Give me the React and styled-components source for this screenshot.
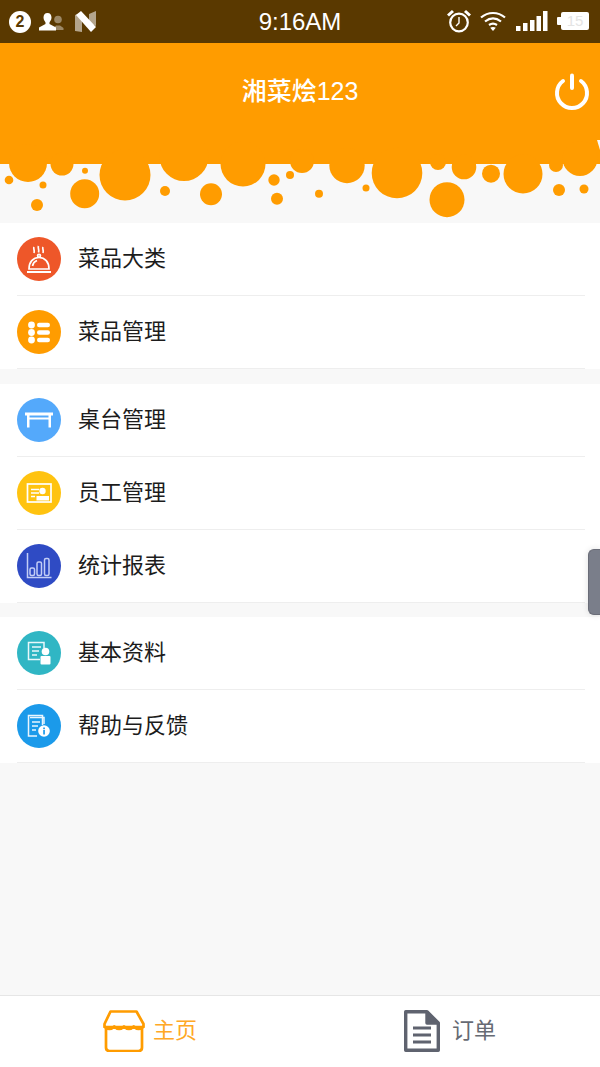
import React from 'react';
import styled, { createGlobalStyle } from 'styled-components';

const GlobalStyle = createGlobalStyle`
  html, body {
    margin: 0;
    padding: 0;
    background: #f8f8f8;
  }
  * {
    box-sizing: border-box;
  }
`;

const FONT = `"Liberation Sans", "Noto Sans CJK SC", sans-serif`;
const ORANGE = '#ff9c00';

const Page = styled.div`
  position: relative;
  width: 600px;
  height: 1067px;
  overflow: hidden;
  display: flex;
  flex-direction: column;
  background: #f8f8f8;
  font-family: ${FONT};
`;

const StatusBar = styled.div`
  height: 43px;
  flex: none;
  display: grid;
  grid-template-columns: 1fr auto 1fr;
  align-items: center;
  padding: 0 11px 0 9px;
  background: #5a3900;
  color: #fff;
`;

const StatusGroup = styled.div`
  display: flex;
  align-items: center;
  justify-content: ${props => (props.$right ? 'flex-end' : 'flex-start')};
  gap: ${props => props.$gap}px;
  padding-bottom: ${props => (props.$right ? 1 : 0)}px;
`;

const Badge = styled.div`
  width: 22px;
  height: 22px;
  border-radius: 50%;
  background: #fff;
  color: #5a3900;
  font-size: 16px;
  font-weight: 700;
  line-height: 22px;
  text-align: center;
`;

const Clock = styled.div`
  margin-left: 2px;
  font-size: 24px;
  line-height: 43px;
`;

const Battery = styled.div`
  position: relative;
  width: 28px;
  height: 18px;
  margin-left: 4px;
  border-radius: 2px;
  background: #fff;
  color: #e4e4e4;
  font-size: 15px;
  line-height: 18px;
  text-align: center;

  &::before {
    content: '';
    position: absolute;
    left: -4px;
    top: 5px;
    width: 4px;
    height: 8px;
    border-radius: 1px 0 0 1px;
    background: #fff;
  }
`;

const Header = styled.header`
  height: 97px;
  flex: none;
  display: grid;
  grid-template-columns: 1fr auto 1fr;
  align-items: center;
  background: ${ORANGE};
  color: #fff;
`;

const Title = styled.h1`
  grid-column: 2;
  margin: 0;
  font-size: 25px;
  font-weight: 500;
  line-height: 97px;
`;

const PowerButton = styled.div`
  grid-column: 3;
  justify-self: end;
  display: flex;
  margin-right: 10px;
`;

const Wave = styled.svg`
  display: block;
  flex: none;
`;

const Groups = styled.main`
  flex: 1;
  display: flex;
  flex-direction: column;
`;

const Group = styled.section`
  margin-top: ${props => props.$top}px;
  background: #fff;
`;

const Row = styled.div`
  height: 73px;
  margin-left: 17px;
  display: flex;
  align-items: center;
  gap: 17px;
  border-bottom: 1px solid #eeeeee;
  margin-right: 15px;
  padding-bottom: 1px;
`;

const RoundIcon = styled.div`
  width: 44px;
  height: 44px;
  flex: none;
  border-radius: 50%;
  background: ${props => props.$color};
  display: flex;
`;

const RowLabel = styled.span`
  padding-bottom: 5px;
  font-size: 22px;
  color: #1c1c1c;
`;

const TabBar = styled.nav`
  height: 72px;
  flex: none;
  display: grid;
  grid-template-columns: 1fr 1fr;
  background: #fff;
  border-top: 1px solid #e6e6e6;
`;

const Tab = styled.div`
  display: flex;
  align-items: center;
  justify-content: center;
  gap: ${props => props.$gap}px;
  padding-bottom: 1px;
  color: ${props => (props.$active ? '#ffa826' : '#666a73')};
  font-size: 22px;
`;

const TabLabel = styled.span`
  padding-bottom: 7px;
`;

const SideHandle = styled.div`
  position: absolute;
  right: 0;
  top: 549px;
  width: 12px;
  height: 66px;
  border-radius: 6px 0 0 6px;
  background: #7a7e8a;
  border: 1px solid #6a6d78;
  border-right: none;
  box-shadow: 0 0 6px rgba(0, 0, 0, 0.12);
`;

const bubbles = [
  [28, 163, 19], [62, 164, 11.5], [85, 170.7, 3], [9, 180, 4.3], [43, 185, 3.5],
  [84.7, 193.7, 14.5], [125, 175, 25.5], [37, 205, 6], [165, 191, 5], [184, 156.5, 24.5],
  [211, 194.3, 11], [243, 164, 22.5], [274, 180, 5.7], [277, 198.7, 6], [290, 175, 4],
  [302, 161, 12], [347, 165.5, 17.7], [319, 193.7, 4], [366, 188, 3.5], [397, 173, 25.3],
  [447, 199.7, 17.5], [438, 162, 8], [464, 167, 12.3], [491, 173.7, 9], [523, 174, 19.5],
  [559, 190, 6], [584, 189, 4.5], [556, 165, 7], [580, 158.5, 17.5],
];

const Bubbles = () => (
  <Wave width="600" height="83" viewBox="0 140 600 83">
    <path d="M0 140H597L600 150V164H0Z" fill={ORANGE} />
    {bubbles.map(([cx, cy, r]) => (
      <circle key={`${cx}-${cy}`} cx={cx} cy={cy} r={r} fill={ORANGE} />
    ))}
  </Wave>
);

const PeopleIcon = () => (
  <svg width="25" height="18" viewBox="0 0 25 18">
    <g fill="#fff" opacity="0.4">
      <circle cx="19" cy="6.500" r="3.800" />
      <path d="M15 17v-2.500l2-2h4l3.500 2.500v2z" />
    </g>
    <path d="M8.500 0C5.800 0 4.500 2 4.500 4.500S6 8 6.500 9.500V11L0 14.500V17.500H17V14.500L10.500 11V9.500C11 8 12.500 7 12.500 4.500S11.200 0 8.500 0Z" fill="#fff" />
  </svg>
);

const NIcon = () => (
  <svg width="22" height="21" viewBox="0 0 22 21" style={{ marginLeft: 3 }}>
    <path d="M0 4L7 1V21L0 20ZM14 3L21 0V15L14 12Z" fill="#fff" opacity="0.55" />
    <path d="M1 4L6 0L21 16L16 21Z" fill="#fff" />
  </svg>
);

const AlarmIcon = () => (
  <svg width="24" height="24" viewBox="0 0 24 24" fill="none" stroke="#fff" style={{ marginRight: 9 }}>
    <circle cx="12" cy="13.500" r="8.800" strokeWidth="2.200" />
    <path d="M12 8v6l-3 3" strokeWidth="1.400" />
    <path d="M1 6.500L6 2M23 6.500L18 2" strokeWidth="3" />
  </svg>
);

const WifiIcon = () => (
  <svg width="26" height="20" viewBox="0 0 26 20" fill="none" stroke="#fff" strokeWidth="2.200">
    <path d="M1 6.500C8 .5 18 .5 25 6.500" />
    <path d="M5 10.500C10 6.500 16 6.500 21 10.500" />
    <path d="M9 14C11.500 12.300 14.500 12.300 17 14" />
    <path d="M13 20l-2.800-3.200c1.800-1 3.800-1 5.600 0z" fill="#fff" stroke="none" />
  </svg>
);

const SignalIcon = () => (
  <svg width="32" height="20" viewBox="0 0 32 20" fill="#fff" style={{ marginLeft: 10, marginRight: 9 }}>
    <rect x="0" y="15" width="4.500" height="5" />
    <rect x="7" y="12" width="4.500" height="8" />
    <rect x="14" y="9" width="4.500" height="11" />
    <rect x="20.500" y="5" width="4.500" height="15" />
    <rect x="27" y="0" width="4.500" height="20" />
  </svg>
);

const PowerIcon = () => (
  <svg width="36" height="37" viewBox="0 0 36 37" fill="none" stroke="#fff" strokeWidth="4" strokeLinecap="round">
    <path d="M9 8A15 15 0 1 0 27 8" />
    <path d="M18 2.500V15" />
  </svg>
);

const DishIcon = () => (
  <svg width="44" height="44" viewBox="0 0 44 44" fill="none" stroke="#fff" strokeWidth="1.700">
    <path d="M17 10c-1 2 1 3 0 6M21.500 9c-1 2 1 3.500 0 6.500M26 10c-1 2 1 3 0 6" />
    <circle cx="22" cy="18.800" r="1.400" />
    <path d="M12 32C12 25 16 20.500 22 20.500S32 25 32 32Z" />
    <path d="M15.500 29C16 26.500 17.500 24.500 20 23.500" />
    <path d="M10 35H34" strokeWidth="2" />
  </svg>
);

const ListIcon = () => (
  <svg width="44" height="44" viewBox="0 0 44 44" fill="#fff">
    <circle cx="14.500" cy="15" r="3.400" />
    <circle cx="14.500" cy="22.500" r="3.400" />
    <circle cx="14.500" cy="30" r="3.400" />
    <rect x="20" y="12.800" width="13" height="4.500" rx="2.200" />
    <rect x="20" y="20.300" width="13" height="4.500" rx="2.200" />
    <rect x="20" y="27.800" width="13" height="4.500" rx="2.200" />
  </svg>
);

const TableIcon = () => (
  <svg width="44" height="44" viewBox="0 0 44 44" fill="#fff">
    <rect x="8" y="14.500" width="28" height="3" />
    <rect x="10" y="19.500" width="24" height="2" />
    <rect x="10" y="17" width="2.500" height="12.500" />
    <rect x="31.500" y="17" width="2.500" height="12.500" />
  </svg>
);

const CardIcon = () => (
  <svg width="44" height="44" viewBox="0 0 44 44">
    <rect x="10.500" y="13" width="23.500" height="18" fill="none" stroke="#fff" strokeWidth="1.700" />
    <path d="M14 18.500h8M14 22h8M14 25.500h4" stroke="#fff" strokeWidth="1.600" />
    <circle cx="25.500" cy="20" r="3.200" fill="#fff" />
    <rect x="19.500" y="25" width="12.500" height="4.500" fill="#fff" />
  </svg>
);

const ChartIcon = () => (
  <svg width="44" height="44" viewBox="0 0 44 44" fill="none" stroke="#c3cef6" strokeWidth="1.500">
    <path d="M10.500 9V33.500H34.500" />
    <rect x="13" y="24" width="4.500" height="7.500" rx="1.500" />
    <rect x="20" y="18" width="4.500" height="13.500" rx="1.500" />
    <rect x="27.500" y="14.500" width="4.500" height="17" rx="1.500" />
  </svg>
);

const ProfileIcon = () => (
  <svg width="44" height="44" viewBox="0 0 44 44" fill="none" stroke="#e9f8fa" strokeWidth="1.500">
    <path d="M23 28.500H11.500V11.500H27V17" />
    <path d="M15 16h9M15 20h7M15 24h5" />
    <circle cx="28.500" cy="20.500" r="3.800" fill="#fff" stroke="none" />
    <rect x="23.500" y="25" width="10" height="8.500" rx="1" fill="#fff" stroke="none" />
  </svg>
);

const HelpIcon = () => (
  <svg width="44" height="44" viewBox="0 0 44 44" fill="none" stroke="#e9f5fe" strokeWidth="1.500">
    <path d="M20 32H11.500V11.500H25.500V21" />
    <path d="M13 13.500H27V20" />
    <path d="M15 18h8M15 22h6M15 26h4" />
    <circle cx="27" cy="27" r="5.800" fill="#fff" stroke="none" />
    <rect x="26.200" y="26" width="1.700" height="4.500" fill="#1b9aea" stroke="none" />
    <rect x="26.200" y="23.500" width="1.700" height="1.700" fill="#1b9aea" stroke="none" />
  </svg>
);

const ShopIcon = () => (
  <svg width="42" height="42" viewBox="0 0 42 42" fill="none" stroke={ORANGE} strokeWidth="2.700" strokeLinejoin="round">
    <path d="M7.500 1.500H33.500L40.500 14V17H1.500V14Z" />
    <path d="M1.500 16.500q4.900 5 9.750 0q4.900 5 9.750 0q4.900 5 9.750 0q4.900 5 9.750 0" />
    <path d="M3 18V37.500Q3 41 6.500 41H35.500Q39 41 39 37.500V18" />
  </svg>
);

const DocIcon = () => (
  <svg width="36" height="42" viewBox="0 0 36 42" fill="none" stroke="#5f636f" strokeWidth="3.400" strokeLinejoin="round">
    <path d="M1.700 1.700H23L34.300 13V40.300H1.700Z" />
    <path d="M23 1.700V13H34.300" fill="#5f636f" />
    <path d="M9 18H27M9 25H27M9 32H27" strokeWidth="3" />
  </svg>
);

const menuGroups = [
  {
    top: 0,
    items: [
      { label: '菜品大类', color: '#ee5729', Icon: DishIcon },
      { label: '菜品管理', color: ORANGE, Icon: ListIcon },
    ],
  },
  {
    top: 15,
    items: [
      { label: '桌台管理', color: '#54a9fb', Icon: TableIcon },
      { label: '员工管理', color: '#ffc310', Icon: CardIcon },
      { label: '统计报表', color: '#2f4bc4', Icon: ChartIcon },
    ],
  },
  {
    top: 14,
    items: [
      { label: '基本资料', color: '#30b6c4', Icon: ProfileIcon },
      { label: '帮助与反馈', color: '#1b9aea', Icon: HelpIcon },
    ],
  },
];

const App = () => {
  return (
    <Page>
      <GlobalStyle />
      <StatusBar>
        <StatusGroup $gap={8}>
          <Badge>2</Badge>
          <PeopleIcon />
          <NIcon />
        </StatusGroup>
        <Clock>9:16AM</Clock>
        <StatusGroup $right $gap={0}>
          <AlarmIcon />
          <WifiIcon />
          <SignalIcon />
          <Battery>15</Battery>
        </StatusGroup>
      </StatusBar>
      <Header>
        <Title>湘菜烩123</Title>
        <PowerButton>
          <PowerIcon />
        </PowerButton>
      </Header>
      <Bubbles />
      <Groups>
        {menuGroups.map(({ top, items }) => (
          <Group key={top} $top={top}>
            {items.map(({ label, color, Icon }) => (
              <Row key={label}>
                <RoundIcon $color={color}>
                  <Icon />
                </RoundIcon>
                <RowLabel>{label}</RowLabel>
              </Row>
            ))}
          </Group>
        ))}
      </Groups>
      <TabBar>
        <Tab $active $gap={8}>
          <ShopIcon />
          <TabLabel>主页</TabLabel>
        </Tab>
        <Tab $gap={12}>
          <DocIcon />
          <TabLabel>订单</TabLabel>
        </Tab>
      </TabBar>
      <SideHandle />
    </Page>
  );
};

export default App;
